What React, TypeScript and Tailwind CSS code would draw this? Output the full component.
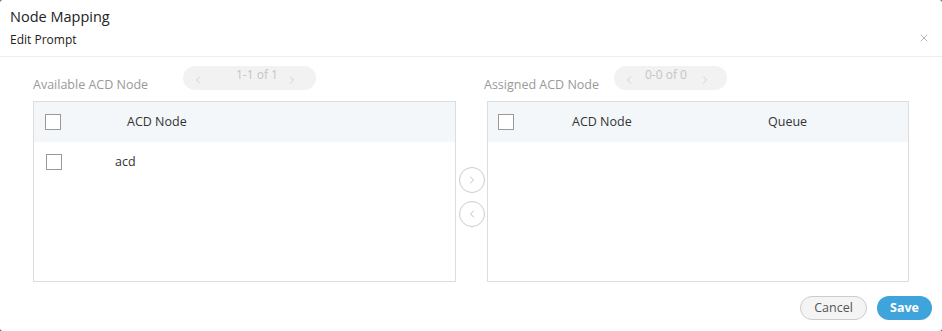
import { ChevronLeft, ChevronRight, X } from "lucide-react";

const font = { fontFamily: '"Open Sans", "Noto Sans", sans-serif' };

function Pager({ text, w, a, b }: { text: string; w: string; a: string; b: string }) {
  return (
    <div className={`${w} h-6 rounded-full bg-[#f2f2f2] flex pl-[9px] text-[#c4c4c4]`}>
      <ChevronLeft className="w-3 h-3 mt-2" strokeWidth={1.5} />
      <span className={`text-[12px] leading-none mt-[3px] ${a}`}>{text}</span>
      <ChevronRight className={`w-3 h-3 mt-2 ${b}`} strokeWidth={1.5} />
    </div>
  );
}

function Box() {
  return <span className="block w-4 h-4 border border-[#999] bg-white shrink-0" />;
}

export default function App() {
  return (
    <div className="w-[942px] h-[331px] bg-[#666]" style={font}>
      <div className="w-full h-full bg-white rounded-[3px] flex flex-col">
        {/* header */}
        <div className="h-[57px] border-b border-[#eeeeee] pl-2.5 pr-3 pt-[7px] flex justify-between">
          <div>
            <div className="text-[14.5px] leading-5 text-[#222]">Node Mapping</div>
            <div className="text-[12px] leading-4 mt-[5px] text-[#222]">Edit Prompt</div>
          </div>
          <X className="w-3 h-3 mt-[25px] text-[#999]" strokeWidth={1.5} />
        </div>

        {/* body */}
        <div className="flex pl-[33px] pt-[9px]">
          {/* left */}
          <div className="w-[423px]">
            <div className="flex h-[35px]">
              <span className="text-[12.5px] text-[#999] mt-[10px] w-[150px]">Available ACD Node</span>
              <Pager text="1-1 of 1" w="w-[133px]" a="ml-[32px]" b="ml-[8px]" />
            </div>
            <div className="h-[181px] border border-[#dddddd]">
              <div className="h-10 bg-[#f3f7fa] flex items-center pl-[11px]">
                <Box />
                <span className="text-[12.5px] text-[#333] ml-[66px]">ACD Node</span>
              </div>
              <div className="h-[40px] flex items-center pl-3">
                <Box />
                <span className="text-[12.5px] text-[#333] ml-[53px]">acd</span>
              </div>
            </div>
          </div>

          {/* middle */}
          <div className="w-[31px] flex flex-col items-center pt-[101px] gap-2 pl-[1px]">
            <button className="w-[26px] h-[26px] rounded-full border border-[#cccccc] flex items-center justify-center text-[#aaa]">
              <ChevronRight className="w-3 h-3" strokeWidth={1.5} />
            </button>
            <button className="w-[26px] h-[26px] rounded-full border border-[#cccccc] flex items-center justify-center text-[#aaa]">
              <ChevronLeft className="w-3 h-3" strokeWidth={1.5} />
            </button>
          </div>

          {/* right */}
          <div className="w-[422px]">
            <div className="flex h-[35px]">
              <span className="text-[12.5px] text-[#999] mt-[10px] w-[130px] -ml-[3px]">Assigned ACD Node</span>
              <Pager text="0-0 of 0" w="w-[113px]" a="ml-[10px]" b="ml-[12px]" />
            </div>
            <div className="h-[181px] border border-[#dddddd]">
              <div className="h-10 bg-[#f3f7fa] flex items-center pl-[10px]">
                <Box />
                <span className="text-[12.5px] text-[#333] ml-[58px] w-[196px]">ACD Node</span>
                <span className="text-[12.5px] text-[#333]">Queue</span>
              </div>
            </div>
          </div>
        </div>

        {/* footer */}
        <div className="flex justify-end gap-2.5 pr-[10px] pt-[14px]">
          <button className="w-[67px] h-6 rounded-full border border-[#cccccc] bg-[#f4f4f4] text-[12.5px] text-[#555]">
            Cancel
          </button>
          <button className="w-[55px] h-6 rounded-full bg-[#3fa3dc] text-[12.5px] font-bold text-white">
            Save
          </button>
        </div>
      </div>
    </div>
  );
}
